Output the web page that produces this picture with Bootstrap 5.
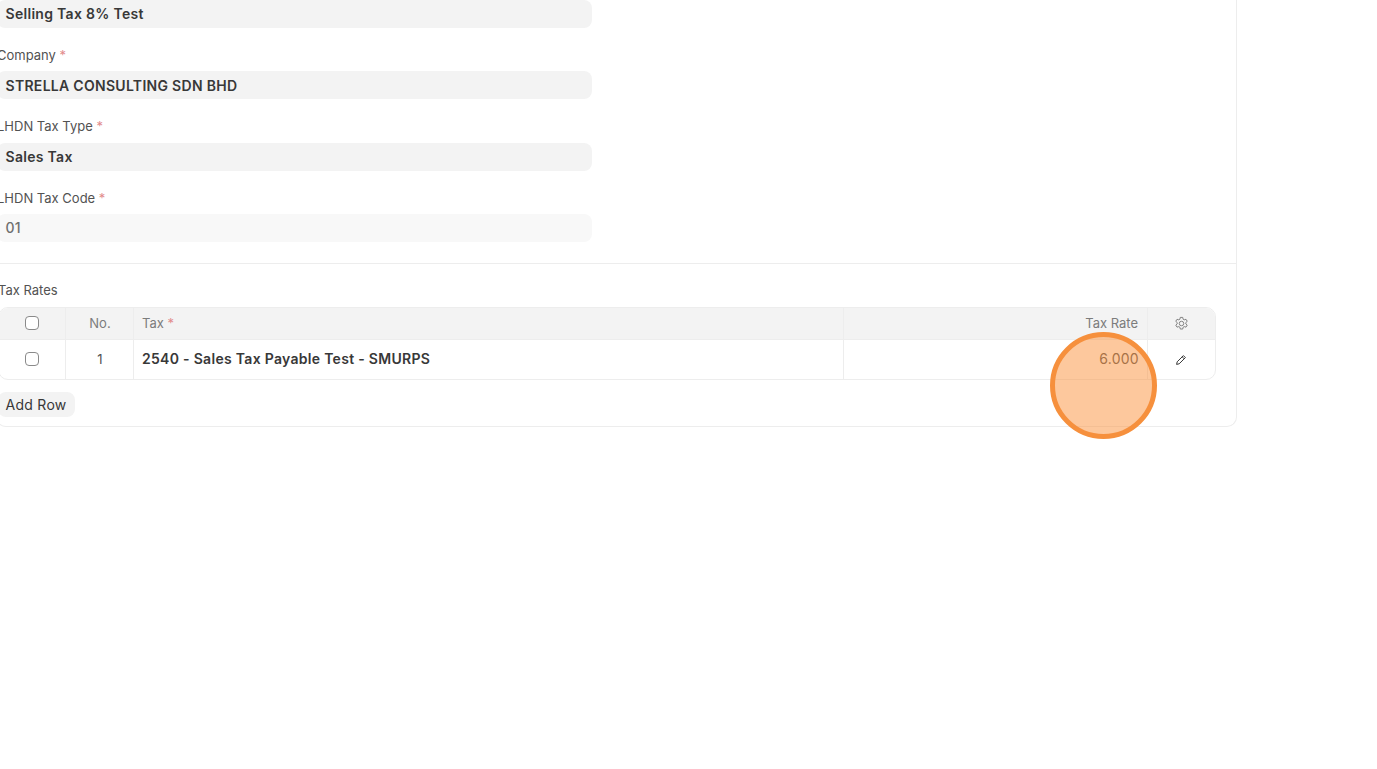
<!DOCTYPE html>
<html lang="en">
<head>
<meta charset="utf-8">
<title>Tax Template</title>
<link href="https://cdn.jsdelivr.net/npm/bootstrap@5.3.0/dist/css/bootstrap.min.css" rel="stylesheet">
<style>
html,body{height:769px;overflow:hidden;background:#fff;}
body{font-family:Inter,"Liberation Sans",sans-serif;color:#383838;position:relative;font-size:13px;}
.sheet{width:1241px;margin:0 0 0 -4px;height:427px;border:1px solid #ededed;border-top:0;border-radius:0 0 10px 10px;}
.fields{width:595px;}
.fld-label{font-size:13px;line-height:16px;color:#525252;margin-bottom:8.4px;height:16px;}
.req{color:#e28b8b;}
.fld-val{height:28px;border-radius:8px;background:#f3f3f3;font-size:14px;font-weight:560;line-height:28px;padding-left:8.5px;letter-spacing:.021em;color:#383838;margin-bottom:19px;}
.fld-val.off{background:#f8f8f8;font-weight:500;color:#6f6f6f;}
.fld-low{line-height:30px;}
.rule{border-top:1px solid #ededed;margin-top:21px;}
.tbl-label{font-size:13px;line-height:16px;color:#525252;margin:18px 0 9px 1px;}
.grid-box{margin-left:1px;width:1218px;border:1px solid #ededed;border-radius:10px;overflow:hidden;}
.grid-row{display:flex;}
.grid-head{height:32px;background:#f3f3f3;color:#7c7c7c;border-bottom:1px solid #ededed;font-size:13px;}
.grid-body{height:39px;color:#383838;}
.c-a,.c-b,.c-c,.c-d,.c-e{display:flex;align-items:center;border-right:1px solid #ededed;height:100%;}
.c-a{width:67px;justify-content:center;padding-bottom:2px;}
.c-b{width:68px;justify-content:center;padding-left:1px;}
.c-c{width:710px;padding-left:8px;}
.c-d{width:304px;justify-content:flex-end;padding-right:9px;}
.c-e{flex:1;justify-content:center;border-right:0;padding-right:1px;}
.tick{width:14px;height:14px;border:1px solid #8a8a8a;border-radius:4px;background:#fff;}
.grid-body .c-b{color:#525252;}
.strong-val{font-size:14px;font-weight:560;letter-spacing:.021em;margin-bottom:2px;}
.rate{font-size:14px;letter-spacing:.02em;color:#525252;margin:0 -1px 2px 0;}
.add-row{display:inline-block;margin:12px 0 0 .5px;height:25px;line-height:25px;padding:0 8px;background:#f3f3f3;border-radius:8px;font-size:14px;letter-spacing:.02em;color:#383838;}
.spot{position:absolute;left:1050px;top:332px;width:107px;height:107px;border-radius:50%;border:5px solid #f6903d;background:rgba(251,146,60,.5);}
</style>
</head>
<body>
<div class="sheet">
  <div class="fields">
    <div class="fld-val">Selling Tax 8% Test</div>
    <div class="fld-label">Company <span class="req">*</span></div>
    <div class="fld-val fld-low">STRELLA CONSULTING SDN BHD</div>
    <div class="fld-label">LHDN Tax Type <span class="req">*</span></div>
    <div class="fld-val">Sales Tax</div>
    <div class="fld-label">LHDN Tax Code <span class="req">*</span></div>
    <div class="fld-val off mb-0">01</div>
  </div>
  <div class="rule"></div>
  <div class="tbl-label">Tax Rates</div>
  <div class="grid-box">
    <div class="grid-row grid-head">
      <div class="c-a"><span class="tick"></span></div>
      <div class="c-b">No.</div>
      <div class="c-c"><span>Tax <span class="req">*</span></span></div>
      <div class="c-d">Tax Rate</div>
      <div class="c-e">
        <svg width="15" height="15" viewBox="0 0 16 16" fill="none" stroke="#7c7c7c" stroke-width="1" stroke-linejoin="round"><path d="M6.7 1.5h2.6l.4 1.9 1.2.7 1.9-.6 1.3 2.2-1.5 1.3v1.4l1.5 1.3-1.3 2.2-1.9-.6-1.2.7-.4 1.9H6.7l-.4-1.9-1.2-.7-1.9.6-1.3-2.2 1.5-1.3V7l-1.5-1.3 1.3-2.2 1.9.6 1.2-.7z"/><circle cx="8" cy="8" r="2.4"/></svg>
      </div>
    </div>
    <div class="grid-row grid-body">
      <div class="c-a"><span class="tick"></span></div>
      <div class="c-b">1</div>
      <div class="c-c"><span class="strong-val">2540 - Sales Tax Payable Test - SMURPS</span></div>
      <div class="c-d"><span class="rate">6.000</span></div>
      <div class="c-e">
        <svg width="12" height="12" viewBox="0 0 12 12" fill="none" stroke="#383838" stroke-width="1" stroke-linejoin="round"><path d="M1.6 10.4l.6-2.6L8.4 1.6l2 2-6.2 6.2z"/><path d="M7.2 2.8l2 2"/></svg>
      </div>
    </div>
  </div>
  <div class="add-row">Add Row</div>
</div>
<div class="spot"></div>
<script src="https://cdn.jsdelivr.net/npm/bootstrap@5.3.0/dist/js/bootstrap.bundle.min.js"></script>
</body>
</html>
